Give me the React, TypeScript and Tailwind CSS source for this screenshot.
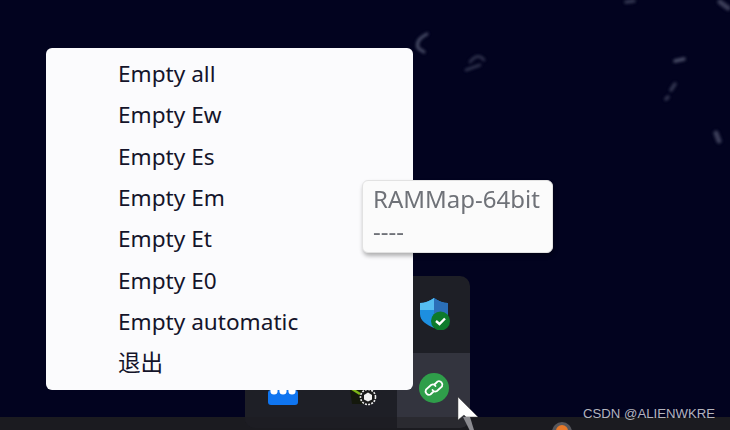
const items = ['Empty all', 'Empty Ew', 'Empty Es', 'Empty Em', 'Empty Et', 'Empty E0', 'Empty automatic', '退出'];

function Wallpaper() {
  return (
    <svg width="730" height="430" viewBox="0 0 730 430" className="absolute inset-0">
      <defs>
        <filter id="soft">
          <feGaussianBlur stdDeviation="1.4" />
        </filter>
      </defs>
      <g filter="url(#soft)" fill="none" stroke="#4a4e68" strokeLinecap="round">
        <path d="M427 34 Q415 40 418 48 L424 52" strokeWidth="3" />
        <path d="M466 70 L480 65 M470 62 Q478 52 484 60" strokeWidth="2.5" opacity="0.7" />
        <path d="M675 61 L684 59" strokeWidth="3.5" />
        <path d="M675 84 L671 90 M668 97 L666 99" strokeWidth="3.5" opacity="0.7" />
        <path d="M716 133 L719 141" strokeWidth="5" opacity="0.8" />
        <path d="M720 2 L728 8" strokeWidth="5" opacity="0.8" />
        <path d="M626 2 L634 1" strokeWidth="3.5" opacity="0.7" />
      </g>
    </svg>
  );
}

export default function App() {
  return (
    <div className="relative h-[430px] w-[730px] overflow-hidden bg-[#02031f] font-['Noto_Sans','Noto_Sans_CJK_SC',sans-serif]">
      <Wallpaper />

      {/* taskbar */}
      <div className="absolute bottom-0 left-0 h-[13px] w-full bg-[#1b1b20]">
        <div className="absolute left-[552px] top-[5px] h-[20px] w-[20px] rounded-full bg-[#55555a] pt-[3px]">
          <div className="mx-auto h-[12px] w-[12px] rounded-full bg-[#e8792a]" />
        </div>
      </div>

      {/* tray flyout */}
      <div className="absolute left-[245px] top-[276px] grid h-[152px] w-[225px] grid-cols-[76px_76px_73px] grid-rows-[77px_64px_11px] overflow-hidden rounded-[10px] bg-[#1e1f26]">
        <div />
        <div />
        <div className="flex items-center justify-center">
          <svg width="32" height="32" viewBox="0 0 32 32" className="mt-[-1px] ml-[2px]">
            <path d="M1 5 Q8 5 15 0 Q22 5 29 5 V16 C29 23 22 27 15 30 C8 27 1 23 1 16 Z" fill="#1d8fe0" />
            <path d="M15 0 Q22 5 29 5 V16 L15 16 Z" fill="#2b6fb8" />
            <path d="M15 0 Q8 5 1 5 V12 L15 12 Z" fill="#55bdf0" />
            <circle cx="21.5" cy="23" r="9.5" fill="#0d7a2b" />
            <path d="M17 23 L20.5 26 L26 20.5" fill="none" stroke="#fff" strokeWidth="2.4" />
          </svg>
        </div>
        <div className="flex items-start justify-center pt-[37px]">
          <svg width="30" height="15" viewBox="0 0 30 15">
            <rect width="30" height="15" rx="3" fill="#0f75f0" />
            <circle cx="6" cy="1" r="3.6" fill="#fff" />
            <circle cx="15" cy="1" r="3.6" fill="#fff" />
            <circle cx="24" cy="1" r="3.6" fill="#fff" />
          </svg>
        </div>
        <div className="flex items-start justify-end pr-[20px] pt-[36px]">
          <svg width="27" height="17" viewBox="0 0 27 17">
            <path d="M0 0 H14 V15 H2 Z" fill="#14180c" />
            <path d="M2 0 L10 5" stroke="#7cb518" strokeWidth="2.5" />
            <circle cx="18" cy="8" r="7.5" fill="#1a1a1a" stroke="#eee" strokeWidth="1.6" strokeDasharray="2 1.2" />
            <path d="M18 3.6 L22 6 V10.4 L18 12.6 L14 10.4 V6 Z" fill="#f2f2f2" />
          </svg>
        </div>
        <div className="flex items-start justify-center bg-[#33343e] pl-[1px] pt-[20px]">
          <svg width="30" height="30" viewBox="0 0 30 30">
            <circle cx="15" cy="15" r="15" fill="#2f9e4a" />
            <path
              d="M15.5 11.5 L18.5 8.5 A3.6 3.6 0 0 1 23 13.5 L18 18 A3.4 3.4 0 0 1 13.5 17 M14.5 18.5 L11.5 21.5 A3.6 3.6 0 0 1 7 16.5 L12 12 A3.4 3.4 0 0 1 16.5 13"
              fill="none"
              stroke="#fff"
              strokeWidth="1.8"
              strokeLinecap="round"
            />
          </svg>
        </div>
        <div className="bg-[#1d1d23]" />
        <div className="bg-[#1d1d23]" />
        <div className="bg-[#2a2a30]" />
      </div>

      {/* mouse cursor */}
      <svg width="24" height="36" viewBox="0 0 24 36" className="absolute left-[457px] top-[396px]">
        <path d="M1 1 V24 L7 19 L9 21 H21 Z" fill="#fff" stroke="#444" strokeWidth="0.5" />
        <path d="M6 21 H13 L17 34 L13 35 Z" fill="#8b8b90" />
      </svg>

      {/* context menu */}
      <div className="absolute left-[46px] top-[48px] flex h-[342px] w-[367px] flex-col rounded-[6px] bg-[#fbfbfd] pl-[72px] pt-[5px] text-[22.6px] text-[#14142a]">
        {items.map((item) => (
          <div key={item} className="flex h-[41.4px] items-center">
            {item}
          </div>
        ))}
      </div>

      {/* tooltip */}
      <div className="absolute left-[362px] top-[180px] h-[73px] w-[191px] rounded-[6px] border border-[#e2e2e2] bg-[#fbfbfb] pl-[10px] pt-[2px] text-[24px] leading-[32px] text-[#6f7278] shadow-[1px_3px_4px_rgba(0,0,0,0.3)]">
        <div>RAMMap-64bit</div>
        <div>----</div>
      </div>

      {/* watermark */}
      <div className="absolute left-[583px] top-[405px] font-['Liberation_Sans',sans-serif] text-[13.2px] leading-[18px] text-[#b4b4bc]">
        CSDN @ALIENWKRE
      </div>
    </div>
  );
}
